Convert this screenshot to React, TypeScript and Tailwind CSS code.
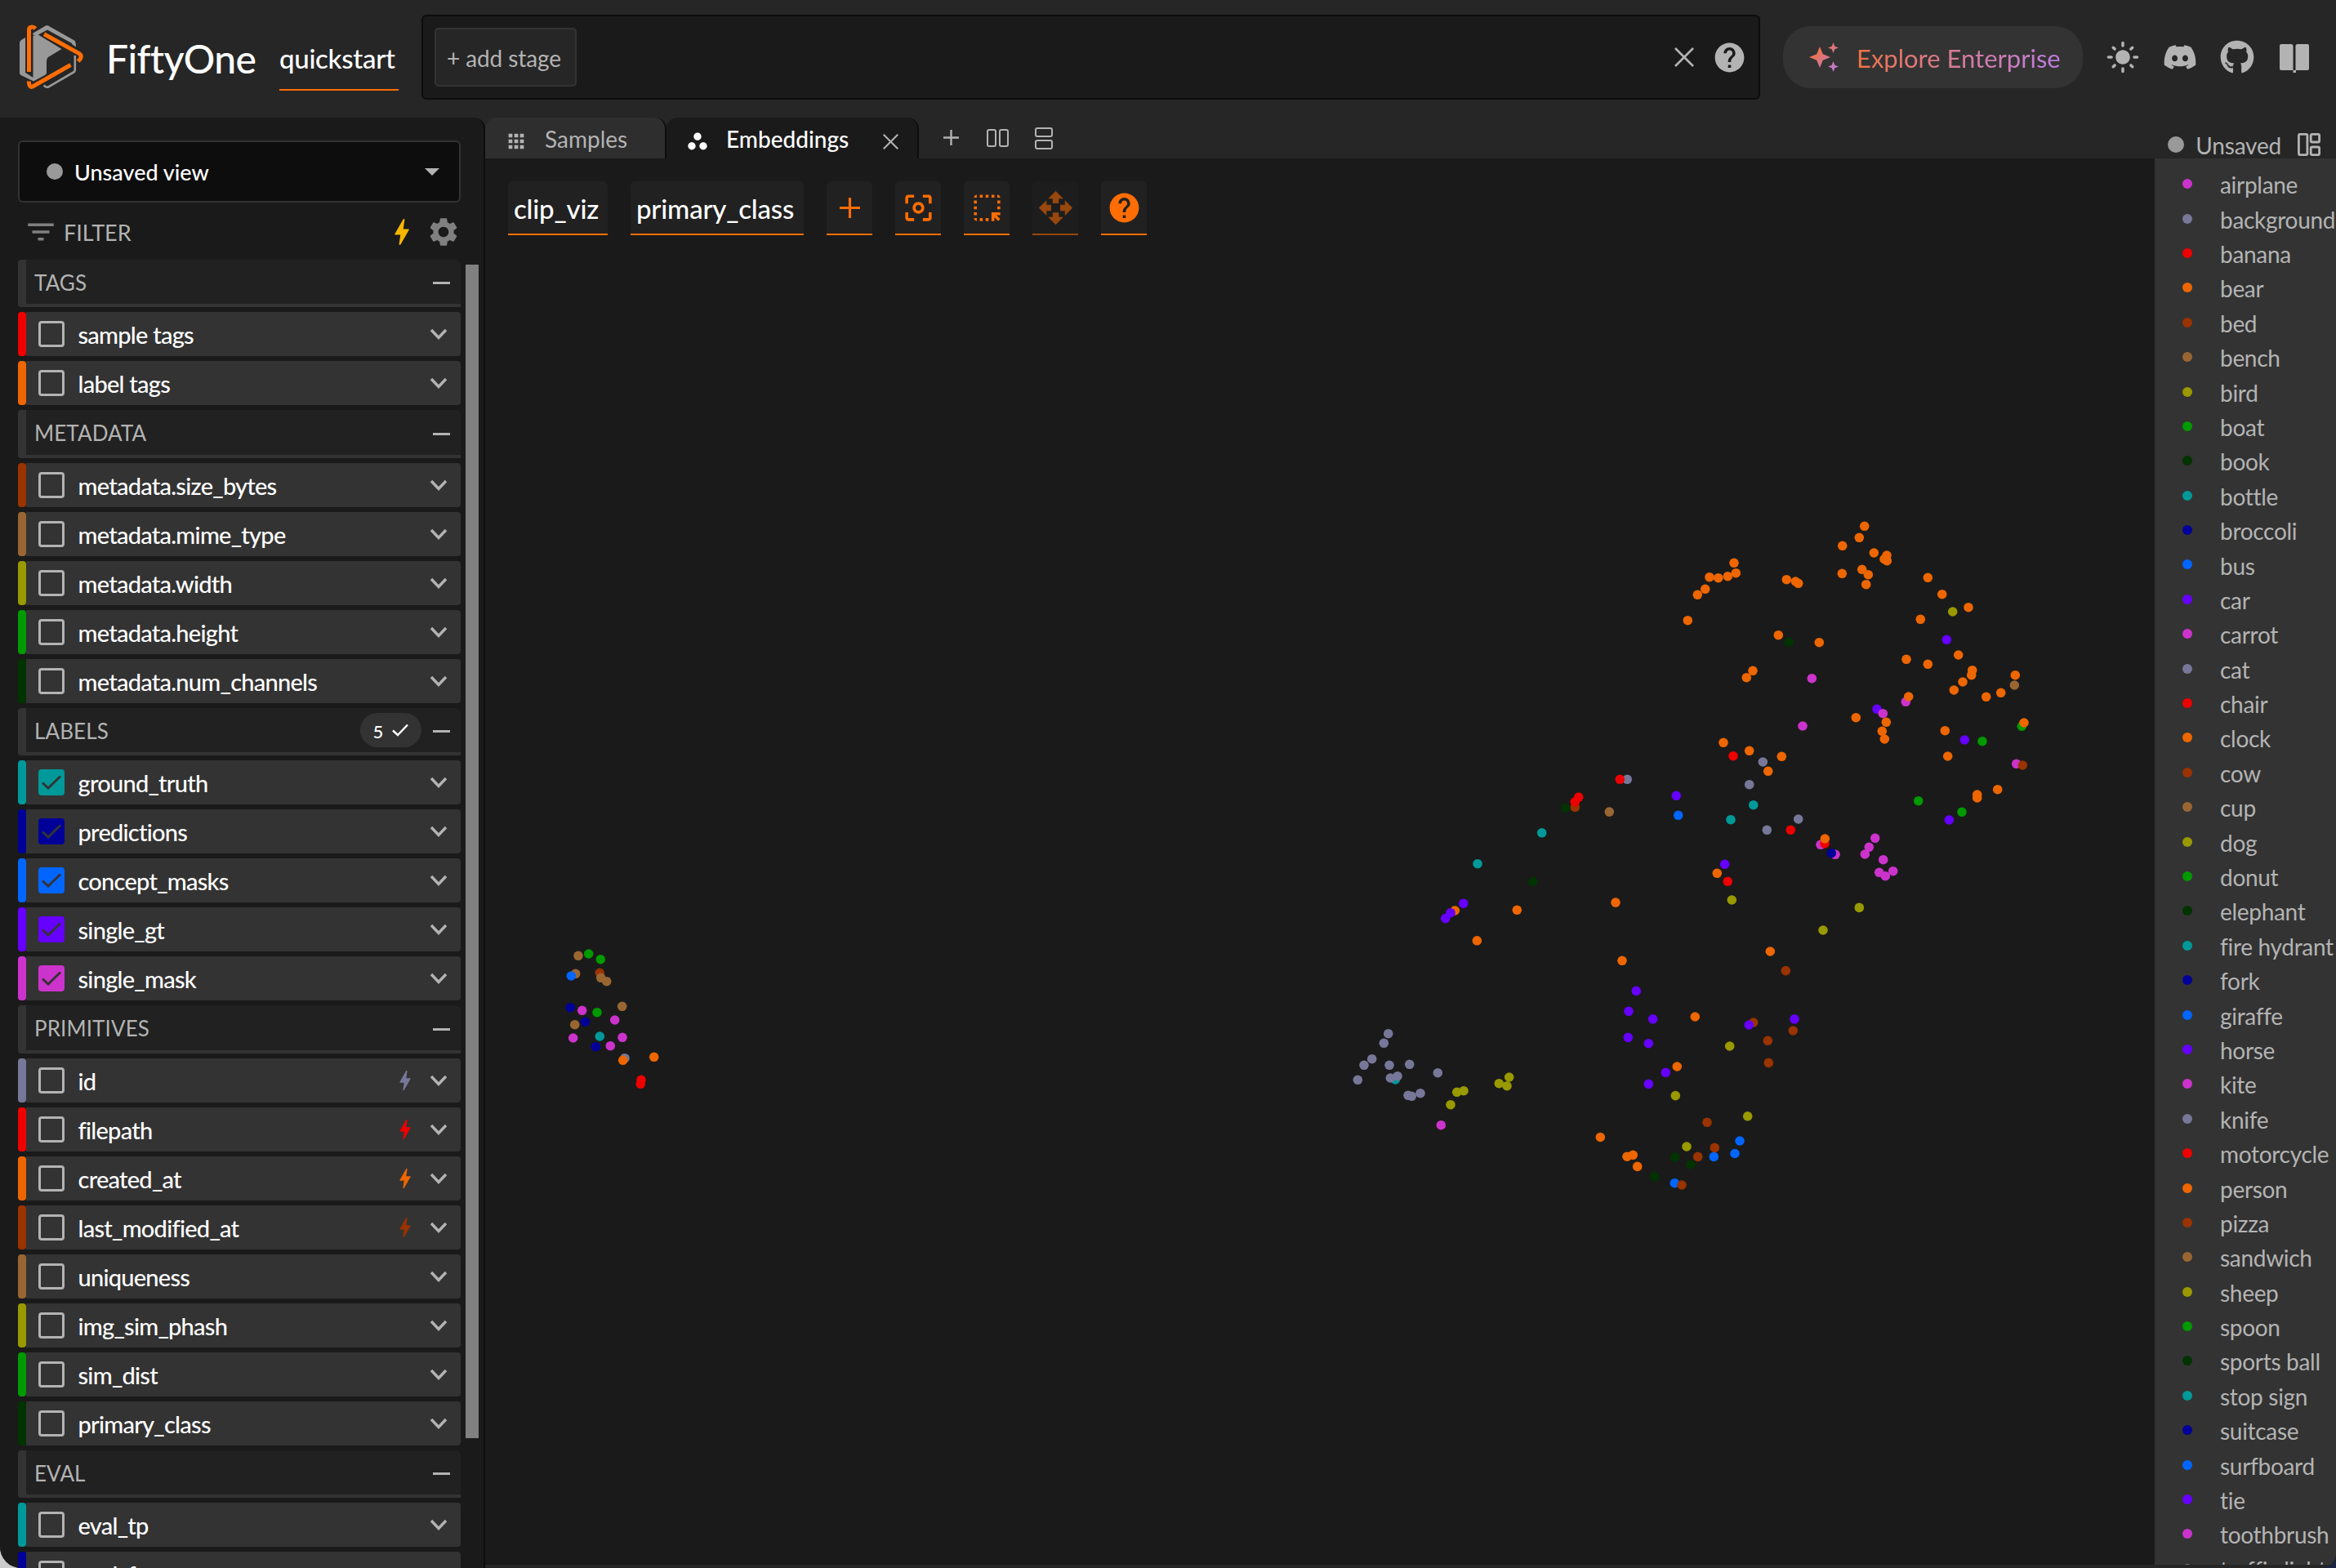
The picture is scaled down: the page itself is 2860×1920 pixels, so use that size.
import { FaDiscord, FaGithub } from 'react-icons/fa';
import {
  MdApps,
  MdBolt,
  MdCenterFocusWeak,
  MdFilterList,
  MdHelp,
  MdHighlightAlt,
  MdLightMode,
  MdOpenWith,
  MdSettings,
  MdWorkspaces,
} from 'react-icons/md';

const MAGENTA = '#cc33cc';
const SLATE = '#777799';
const RED = '#ee0000';
const ORANGE = '#ee6600';
const RUST = '#993300';
const BROWN = '#996633';
const OLIVE = '#999900';
const GREEN = '#009900';
const FOREST = '#003300';
const TEAL = '#009999';
const NAVY = '#000099';
const BLUE = '#0066ff';
const PURPLE = '#6600ff';

const palette = [MAGENTA, SLATE, RED, ORANGE, RUST, BROWN, OLIVE, GREEN, FOREST, TEAL, NAVY, BLUE, PURPLE];

const classes = [
  'airplane', 'background', 'banana', 'bear', 'bed', 'bench', 'bird', 'boat', 'book', 'bottle',
  'broccoli', 'bus', 'car', 'carrot', 'cat', 'chair', 'clock', 'cow', 'cup', 'dog', 'donut',
  'elephant', 'fire hydrant', 'fork', 'giraffe', 'horse', 'kite', 'knife', 'motorcycle', 'person',
  'pizza', 'sandwich', 'sheep', 'spoon', 'sports ball', 'stop sign', 'suitcase', 'surfboard', 'tie',
  'toothbrush', 'traffic light',
];

type Field = { name: string; color: string; checked?: boolean; indexed?: boolean };
type Group = { title: string; count?: number; fields: Field[] };

const groups: Group[] = [
  {
    title: 'TAGS',
    fields: [
      { name: 'sample tags', color: RED },
      { name: 'label tags', color: ORANGE },
    ],
  },
  {
    title: 'METADATA',
    fields: [
      { name: 'metadata.size_bytes', color: RUST },
      { name: 'metadata.mime_type', color: BROWN },
      { name: 'metadata.width', color: OLIVE },
      { name: 'metadata.height', color: GREEN },
      { name: 'metadata.num_channels', color: FOREST },
    ],
  },
  {
    title: 'LABELS',
    count: 5,
    fields: [
      { name: 'ground_truth', color: TEAL, checked: true },
      { name: 'predictions', color: NAVY, checked: true },
      { name: 'concept_masks', color: BLUE, checked: true },
      { name: 'single_gt', color: PURPLE, checked: true },
      { name: 'single_mask', color: MAGENTA, checked: true },
    ],
  },
  {
    title: 'PRIMITIVES',
    fields: [
      { name: 'id', color: SLATE, indexed: true },
      { name: 'filepath', color: RED, indexed: true },
      { name: 'created_at', color: ORANGE, indexed: true },
      { name: 'last_modified_at', color: RUST, indexed: true },
      { name: 'uniqueness', color: BROWN },
      { name: 'img_sim_phash', color: OLIVE },
      { name: 'sim_dist', color: GREEN },
      { name: 'primary_class', color: FOREST },
    ],
  },
  {
    title: 'EVAL',
    fields: [
      { name: 'eval_tp', color: TEAL },
      { name: 'eval_fp', color: NAVY },
    ],
  },
];

// Drawn in order, later series sit on top
const series: { color: string; points: [number, number][] }[] = [
  {
    color: GREEN,
    points: [
      [2475.3, 889.3], [2427, 907.7], [2348.7, 980.7], [2402, 994.3], [720.7, 1168], [735.3, 1174.7], [731, 1239.7],
    ],
  },
  {
    color: TEAL,
    points: [
      [2146.7, 985.7], [2119, 1003.7], [1887.7, 1019.8], [1809, 1057.7], [1708.3, 1322], [734.3, 1269],
    ],
  },
  { color: PURPLE, points: [[2298, 868.3]] },
  {
    color: MAGENTA,
    points: [
      [2218.3, 830.7], [2333.3, 859.3], [2305.3, 873.7], [2207, 889], [2468.7, 935.3], [2229, 1034.3],
      [2247, 1046.3], [2295.7, 1026.3], [2288.3, 1037.3], [2283.3, 1046], [2305.7, 1052.7], [2317.7, 1066.7],
      [2300.7, 1068.3], [2308.3, 1072.7], [1764.3, 1377.7], [712.7, 1237.3], [752.7, 1249], [701.7, 1271],
      [762, 1270.3], [747.3, 1280.7],
    ],
  },
  { color: NAVY, points: [[2242.3, 1044.7], [698.3, 1233.7], [716.3, 1251.3], [729.3, 1281.7]] },
  {
    color: SLATE,
    points: [
      [2158.3, 933], [2141.7, 960.7], [2201.7, 1003], [2163.3, 1016.3], [1992.3, 954.3], [1699.7, 1265.7],
      [1694.3, 1277.3], [1679.7, 1296.7], [1670, 1304.3], [1701, 1304.3], [1725.7, 1303.3], [1662.3, 1322.3],
      [1702.3, 1320], [1711, 1317.7], [1760.3, 1313.7], [1724, 1341.3], [1728.3, 1342.3], [1739, 1338.7],
      [765, 1295.7],
    ],
  },
  {
    color: BLUE,
    points: [[2054.7, 998.3], [2130, 1397], [2124, 1412.5], [2098.3, 1416.4], [2050.3, 1448.7]],
  },
  {
    color: RUST,
    points: [
      [2476.3, 937], [2186.3, 1188.6], [2146.7, 1252], [2195.3, 1262], [2164.3, 1274.3], [2165.3, 1301.4],
      [2090, 1374.3], [2099.3, 1405.4], [2078.7, 1416.4], [2059, 1451], [1928.3, 988.4], [734.3, 1191.3],
    ],
  },
  {
    color: BROWN,
    points: [
      [2466.3, 839], [1970.3, 994.1], [708, 1170.3], [704.7, 1192.3], [735.7, 1197.3], [742.7, 1201.7],
      [761.7, 1232.3], [703.7, 1254.7],
    ],
  },
  { color: BLUE, points: [[699.3, 1195]] },
  {
    color: RED,
    points: [
      [2122, 925.7], [2192.3, 1016.3], [2234, 1033], [2115.3, 1079.3], [1983.3, 954.3], [1932.7, 976.1],
      [1928.3, 981.9], [785, 1322.3], [784.3, 1327.3],
    ],
  },
  {
    color: FOREST,
    points: [[2190.3, 786], [2070, 1426], [1916.7, 989.5], [1876.7, 1079.5], [2050.7, 1417], [2025.7, 1440.7]],
  },
  {
    color: OLIVE,
    points: [
      [2390.7, 749], [2120.3, 1102], [2276.3, 1111.4], [2232, 1139], [2117.7, 1281], [2139.7, 1366.8],
      [2065, 1404], [2051.3, 1341.6], [1783.7, 1337.3], [1792, 1335.7], [1776, 1352.7], [1835.3, 1326.7],
      [1847.7, 1319], [1845, 1329.7],
    ],
  },
  {
    color: ORANGE,
    points: [
      [2282.7, 644.3], [2276.3, 658.3], [2255.7, 668.3], [2294.3, 677], [2310, 680], [2307, 684.7],
      [2310.3, 686.7], [2279.7, 697.3], [2287.3, 703.7], [2284.7, 715.7], [2255.3, 702.3], [2123, 689.3],
      [2093, 706.7], [2103.7, 707.7], [2115.3, 705.7], [2125.3, 701.7], [2087.7, 721.3], [2078.3, 728.3],
      [2066.3, 759.7], [2187.3, 709.7], [2198.3, 712], [2201.7, 714.3], [2360.3, 707.3], [2377.7, 727.7],
      [2410, 743.7], [2351.3, 758.3], [2177.3, 777.7], [2227.3, 786.7], [2146, 821.3], [2138.3, 829.7],
      [2334, 807.3], [2360.3, 813.3], [2397.7, 802], [2414.7, 820.7], [2413.7, 826.7], [2403, 835],
      [2392.3, 845], [2431.7, 853.3], [2449.7, 848.3], [2467.3, 826.7], [2336.7, 853], [2272.3, 878.7],
      [2309.3, 884.3], [2304.3, 895.3], [2307.3, 905], [2381.3, 894.7], [2384.7, 926], [2478, 885],
      [2110, 909.3], [2141.7, 919.3], [2181.3, 926.3], [2164.7, 944.3], [2445.7, 966.7], [2420.7, 973],
      [2420.7, 977], [2234.3, 1027], [2102.3, 1069.3], [2167.3, 1165], [2075.3, 1245], [1781.3, 1115],
      [1857.3, 1114.3], [1808.3, 1151.8], [1978, 1105.1], [1986, 1176.3], [2053.3, 1306], [1959.3, 1392.5],
      [1992, 1416.2], [1999.3, 1414.3], [2004.7, 1428.4], [762.7, 1298.3], [800.7, 1294.3],
    ],
  },
  {
    color: PURPLE,
    points: [
      [2383.3, 783.3], [2405.3, 906], [2386.3, 1004], [2052.3, 974.3], [2111.7, 1058.3], [2141.3, 1255],
      [2197, 1247.9], [1791.7, 1106.3], [1776, 1117.7], [1769.7, 1124.6], [2003.3, 1213.4], [1994, 1238.3],
      [2023.7, 1247.8], [1993.3, 1270.4], [2018.3, 1277.7], [2039.3, 1313.3], [2018.3, 1327.4],
    ],
  },
];

function Logo() {
  return (
    <svg viewBox="22 30 82 80" className="h-20 w-[82px] shrink-0" fill="none">
      <path d="M31 46 L26 49 Q24 50.500 24 53 V89 Q24 91 25.500 92 L41 99.500 L55 92 Q57 91 57 88.500 V75 Q57 71.500 59 70 L75.500 60 L46 42 L40.500 44 V95 L31 89 Z" fill="#999" />
      <path d="M40.500 43 V40.500 L56 31.500 Q57.500 30.600 59 31.500 L91 49.500 Q93 51 93 57.500 L88 54 V53 L58 36.500 L46 43 Z" fill="#999" />
      <path d="M91.800 68 V85.500 Q91.800 87.500 90 88.500 L59 106.500 Q57 107.500 53.500 104.500" stroke="#999" strokeWidth="2.600" />
      <path d="M43.500 35 Q41 32.500 38.500 33 Q35.500 33.500 35.500 37 V88" stroke="#ff6d04" strokeWidth="5" />
      <path d="M54 41.800 L97 65.500 Q100.500 68 98.500 72 L95.500 75" stroke="#ff6d04" strokeWidth="5" />
      <path d="M86.500 79.500 L40 106 Q35.500 108 35.300 99.500" stroke="#ff6d04" strokeWidth="5" />
    </svg>
  );
}

function Sparkles() {
  return (
    <svg viewBox="0 0 36 36" className="h-9 w-9">
      <defs>
        <linearGradient id="spark" x1="0" y1="0" x2="1" y2="1">
          <stop offset="0.2" stopColor="#f0713c" />
          <stop offset="1" stopColor="#b97be8" />
        </linearGradient>
      </defs>
      <path
        fill="url(#spark)"
        d="M13 5 L16.800 14.200 L26 18 L16.800 21.800 L13 31 L9.200 21.800 L0 18 L9.200 14.200 Z M29.500 0 L31.300 4.700 L36 6.500 L31.300 8.300 L29.500 13 L27.700 8.300 L23 6.500 L27.700 4.700 Z M29.500 23 L31.300 27.700 L36 29.500 L31.300 31.300 L29.500 36 L27.700 31.300 L23 29.500 L27.700 27.700 Z"
      />
    </svg>
  );
}

function Cross({ className }: { className: string }) {
  return (
    <svg viewBox="0 0 24 24" className={className} stroke="currentColor" strokeWidth="2.600">
      <path d="M1 1 L23 23 M23 1 L1 23" />
    </svg>
  );
}

function Plus({ className }: { className: string }) {
  return (
    <svg viewBox="0 0 24 24" className={className} stroke="currentColor" strokeWidth="3">
      <path d="M12 0 V24 M0 12 H24" />
    </svg>
  );
}

function Header() {
  return (
    <header className="flex h-36 shrink-0 items-center pb-1 pl-[22px]">
      <Logo />
      <div className="ml-[26px] w-[186px] pt-[3px] text-[48px] leading-none font-medium tracking-[-0.6px] text-white">FiftyOne</div>
      <div className="mb-[29px] ml-[26px] flex h-[79px] w-[146px] items-center self-end border-b-2 border-[#ff6d04] pt-0.5">
        <span className="text-[33px] font-medium tracking-[-0.3px] text-white">quickstart</span>
      </div>
      <div className="ml-7 flex h-26 w-[1639px] items-center rounded-md border-2 border-[#0d0d0d] bg-[#1a1a1a] px-[14px]">
        <div className="flex h-[72px] w-[174px] items-center rounded-[5px] border-2 border-[#333] bg-[#262626] pt-0.5 pl-[13px] text-[28px] tracking-[-0.1px] whitespace-nowrap">
          + add stage
        </div>
        <Cross className="ml-auto h-6 w-6" />
        <MdHelp className="ml-[22px] h-[43px] w-[43px]" />
      </div>
      <div className="ml-7 flex h-19 w-[367px] items-center rounded-[34px] bg-[#333] pl-[32px]">
        <Sparkles />
        <span className="ml-[22px] bg-linear-to-r from-[#ef7040] to-[#bd7ce0] bg-clip-text pt-[3px] text-[31px] whitespace-nowrap text-transparent">
          Explore Enterprise
        </span>
      </div>
      <MdLightMode className="ml-[28px] h-[42px] w-[42px]" />
      <FaDiscord className="ml-7 h-[42px] w-[42px]" />
      <FaGithub className="ml-7 h-[42px] w-[42px]" />
      <svg viewBox="0 0 36 36" className="mt-1 ml-[31px] h-9 w-9" fill="currentColor">
        <path d="M2 0 H14 Q16.500 0 16.500 3 V32 H2 Q0 32 0 30 V2 Q0 0 2 0 Z M22 0 H34 Q36 0 36 2 V30 Q36 32 34 32 H20 V35 H16.500 V32 H19.500 V3 Q19.500 0 22 0 Z" />
      </svg>
    </header>
  );
}

function GroupHeader({ group }: { group: Group }) {
  return (
    <div className="mb-1.5 flex h-[58.5px] shrink-0">
      <div className="w-2.5 rounded-l bg-[#333]" />
      <div className="flex flex-1 items-center rounded-tr-md border-b-4 border-[#333] bg-[#212121] pr-[13px] pl-[10px]">
        <span className="pt-[3px] text-[26px] tracking-[0.1px]">{group.title}</span>
        {group.count && (
          <div className="mr-[14px] ml-auto flex h-[42px] w-[75px] items-center justify-center gap-[11px] rounded-full bg-[#333] text-[22px] text-white">
            <span className="pt-1 font-medium">{group.count}</span>
            <svg viewBox="0 0 20 16" className="h-4 w-5" fill="none" stroke="currentColor" strokeWidth="2.400">
              <path d="M1 8.500 L7 14 L19 1.500" />
            </svg>
          </div>
        )}
        <div className={group.count ? 'mt-1 h-[3px] w-[21px] bg-[#b3b3b3]' : 'mt-1 ml-auto h-[3px] w-[21px] bg-[#b3b3b3]'} />
      </div>
    </div>
  );
}

function FieldRow({ field }: { field: Field }) {
  return (
    <div className="mb-1.5 flex h-[54px] shrink-0">
      <div className="w-2.5 rounded" style={{ backgroundColor: field.color }} />
      <div className="flex flex-1 items-center rounded-r bg-[#333] pr-[17px] pl-[15px]">
        {field.checked ? (
          <div className="flex h-8 w-8 items-center justify-center rounded" style={{ backgroundColor: field.color }}>
            <svg viewBox="0 0 24 18" className="h-[18px] w-6" fill="none" stroke="#333" strokeWidth="3">
              <path d="M1 9.500 L8 16 L23 1.500" />
            </svg>
          </div>
        ) : (
          <div className="h-8 w-8 rounded border-[3px] border-[#b3b3b3]" />
        )}
        <span className="ml-[16.5px] pt-0.5 text-[29px] font-medium tracking-[-0.75px] text-white">{field.name}</span>
        <div className="ml-auto flex items-center gap-[15px]">
          {field.indexed && <MdBolt className="h-8 w-8" style={{ color: field.color }} />}
          <svg viewBox="0 0 20 12" className="h-3 w-5 overflow-visible" fill="none" stroke="#b3b3b3" strokeWidth="3.400">
            <path d="M1 1 L10 10.500 L19 1" />
          </svg>
        </div>
      </div>
    </div>
  );
}

function Sidebar() {
  return (
    <aside className="flex w-[594px] shrink-0 flex-col overflow-hidden rounded-tr-[14px] border-r-2 border-[#0d0d0d] bg-[#1a1a1a]">
      <div className="mt-7 ml-[22px] flex h-19 w-[542px] shrink-0 items-center rounded-md border-2 border-[#333] bg-[#0d0d0d] pr-[24px] pl-[33px]">
        <div className="h-5 w-5 rounded-full bg-[#999]" />
        <span className="ml-[14px] pt-0.5 text-[27px] font-medium text-white">Unsaved view</span>
        <svg viewBox="0 0 18 9" className="ml-auto h-[9px] w-[18px]" fill="#b3b3b3">
          <path d="M0 0 H18 L9 9 Z" />
        </svg>
      </div>
      <div className="flex h-[69.7px] shrink-0 items-center pt-0.5 pl-[29px]">
        <MdFilterList className="h-[42px] w-[42px] text-[#808080]" />
        <span className="ml-[7px] pt-0.5 text-[27px]">FILTER</span>
        <MdBolt className="ml-auto h-[42px] w-[42px] text-[#f5b700]" />
        <MdSettings className="mr-[28px] ml-[9px] h-[42px] w-[42px] text-[#808080]" />
      </div>
      <div className="flex min-h-0 flex-1">
        <div className="ml-[22px] flex w-[542px] flex-col overflow-hidden">
          {groups.map((group) => (
            <div key={group.title} className="shrink-0">
              <GroupHeader group={group} />
              {group.fields.map((field) => (
                <FieldRow key={field.name} field={field} />
              ))}
            </div>
          ))}
        </div>
        <div className="mt-1.5 ml-1.5 h-[1437px] w-4 bg-[#808080]" />
      </div>
    </aside>
  );
}

function TabBar() {
  return (
    <div className="flex h-[50px] shrink-0">
      <div className="flex w-[222px] items-center rounded-t-[14px] border-r-2 border-[#0d0d0d] bg-[#2e2e2e] pl-6">
        <MdApps className="mt-2 h-7 w-7" />
        <span className="ml-[21px] pt-px text-[28px]">Samples</span>
      </div>
      <div className="flex w-[309px] items-center rounded-t-[14px] border-r-2 border-[#0d0d0d] bg-[#1a1a1a] pl-6 text-white">
        <MdWorkspaces className="mt-2 h-7 w-7" />
        <span className="ml-[21px] pt-px text-[28px] font-medium">Embeddings</span>
        <Cross className="mt-2 mr-[23px] ml-auto h-[19px] w-[19px] text-[#b3b3b3]" />
      </div>
      <Plus className="mt-[15px] ml-[30px] h-[19px] w-[19px]" />
      <div className="mt-3.5 ml-[34px] flex h-[22px] gap-[3px]">
        <div className="w-3 rounded-[3px] border-[2.5px] border-[#b3b3b3]" />
        <div className="w-3 rounded-[3px] border-[2.5px] border-[#b3b3b3]" />
      </div>
      <div className="mt-3 ml-8 flex h-[27px] w-[22px] flex-col gap-[3px]">
        <div className="flex-1 rounded-[3px] border-[2.5px] border-[#b3b3b3]" />
        <div className="flex-1 rounded-[3px] border-[2.5px] border-[#b3b3b3]" />
      </div>
      <div className="mt-4 mr-[19px] ml-auto flex items-center">
        <div className="h-5 w-5 rounded-full bg-[#999]" />
        <span className="ml-[14px] pt-px text-[28px] tracking-[-0.2px]">Unsaved</span>
        <svg viewBox="0 0 28 28" className="ml-[20px] h-7 w-7" fill="none" stroke="currentColor" strokeWidth="2.800">
          <rect x="1.400" y="1.400" width="10.500" height="25.200" rx="1.500" />
          <rect x="16.200" y="1.400" width="10.400" height="9.600" rx="1.500" />
          <rect x="16.200" y="17" width="10.400" height="9.600" rx="1.500" />
        </svg>
      </div>
    </div>
  );
}

const toolClass = 'flex h-[66px] w-14 items-center justify-center rounded-t-md border-b-2 border-[#ff6d04] bg-[#212121] text-[#ff6d04]';

function Toolbar() {
  return (
    <div className="flex gap-7 pt-7 pl-7">
      <div className="flex h-[66px] w-[122px] items-center rounded-t-md border-b-2 border-[#ff6d04] bg-[#212121] pt-1 pl-[7px] text-[33px] font-medium tracking-[-0.2px] text-white">
        clip_viz
      </div>
      <div className="flex h-[66px] w-[212px] items-center rounded-t-md border-b-2 border-[#ff6d04] bg-[#212121] pt-1 pl-[7px] text-[33px] font-medium tracking-[-0.2px] text-white">
        primary_class
      </div>
      <div className={toolClass}><Plus className="h-[25px] w-[25px]" /></div>
      <div className={toolClass}><MdCenterFocusWeak className="h-[43px] w-[43px]" /></div>
      <div className={toolClass}><MdHighlightAlt className="h-[43px] w-[43px]" /></div>
      <div className={`${toolClass} opacity-55`}><MdOpenWith className="h-[45px] w-[45px]" /></div>
      <div className={toolClass}><MdHelp className="h-[43px] w-[43px]" /></div>
    </div>
  );
}

function Scatter() {
  return (
    <svg viewBox="594 288 2044 1628" className="h-[1628px] w-[2044px]">
      {series.map((s, i) => (
        <g key={i} fill={s.color}>
          {s.points.map(([x, y]) => (
            <circle key={`${x}-${y}`} cx={x} cy={y} r="5.800" />
          ))}
        </g>
      ))}
    </svg>
  );
}

function Legend() {
  return (
    <div className="flex w-[222px] shrink-0 flex-col overflow-hidden bg-[#333] pt-[10px]">
      {classes.map((name, i) => (
        <div key={name} className="flex h-[42.4px] shrink-0 items-center pl-[34px]">
          <div className="h-3 w-3 shrink-0 rounded-full" style={{ backgroundColor: palette[i % palette.length] }} />
          <span className="ml-[34px] pt-0.5 text-[28px] tracking-[-0.3px] whitespace-nowrap">{name}</span>
        </div>
      ))}
    </div>
  );
}

export default function App() {
  return (
    <div className="h-[1920px] w-[2860px] overflow-hidden bg-linear-to-r from-[#cccccc] from-50% to-[#1b2440] to-50%">
      <div className="flex h-full flex-col overflow-hidden rounded-br-[18px] rounded-bl-[26px] bg-[#262626] font-['Lato','Noto_Sans',sans-serif] text-[#b3b3b3]">
        <Header />
        <div className="flex min-h-0 flex-1">
          <Sidebar />
          <main className="flex min-w-0 flex-1 flex-col">
            <TabBar />
            <div className="mb-1 flex min-h-0 flex-1">
              <div className="flex-1 overflow-hidden bg-[#1a1a1a]">
                <Toolbar />
                <Scatter />
              </div>
              <Legend />
            </div>
          </main>
        </div>
      </div>
    </div>
  );
}
